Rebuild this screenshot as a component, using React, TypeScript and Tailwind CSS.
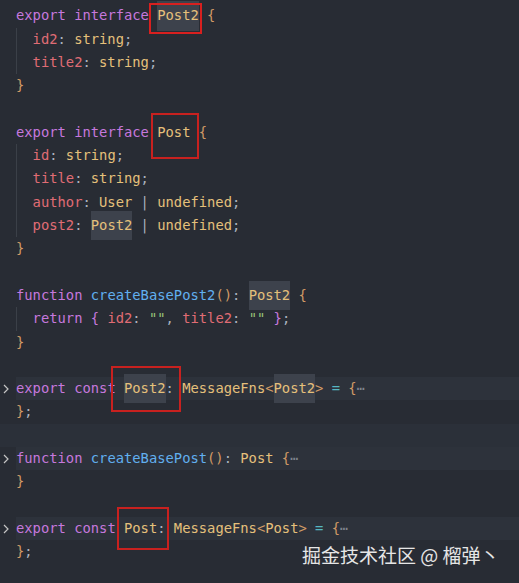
type Tok = [string, string?, boolean?];

const C = {
  kw: "#c678dd",
  fn: "#61afef",
  ty: "#e5c07b",
  pr: "#e06c75",
  st: "#98c379",
  p: "#abb2bf",
  b1: "#d19a66",
  b2: "#c678dd",
  op: "#56b6c2",
  dim: "#7f848e",
};

type Line = { toks: Tok[]; indent?: boolean; fold?: boolean; current?: boolean };

const lines: Line[] = [
  { toks: [["export ", C.kw], ["interface ", C.kw], ["Post2", C.ty, true], [" "], ["{", C.b1]] },
  { indent: true, toks: [["id2", C.pr], [": "], ["string", C.ty], [";"]] },
  { indent: true, toks: [["title2", C.pr], [": "], ["string", C.ty], [";"]] },
  { toks: [["}", C.b1]] },
  { toks: [] },
  { toks: [["export ", C.kw], ["interface ", C.kw], ["Post", C.ty], [" "], ["{", C.b1]] },
  { indent: true, toks: [["id", C.pr], [": "], ["string", C.ty], [";"]] },
  { indent: true, toks: [["title", C.pr], [": "], ["string", C.ty], [";"]] },
  { indent: true, toks: [["author", C.pr], [": "], ["User", C.ty], [" | "], ["undefined", C.ty], [";"]] },
  { indent: true, toks: [["post2", C.pr], [": "], ["Post2", C.ty, true], [" | "], ["undefined", C.ty], [";"]] },
  { toks: [["}", C.b1]] },
  { toks: [] },
  { toks: [["function ", C.kw], ["createBasePost2", C.fn], ["()", C.b1], [": "], ["Post2", C.ty, true], [" "], ["{", C.b1]] },
  {
    indent: true,
    toks: [["return ", C.kw], ["{", C.b2], [" "], ["id2", C.pr], [": "], ['""', C.st], [", "], ["title2", C.pr], [": "], ['""', C.st], [" "], ["}", C.b2], [";"]],
  },
  { toks: [["}", C.b1]] },
  { toks: [] },
  {
    fold: true,
    toks: [["export ", C.kw], ["const ", C.kw], ["Post2", C.ty, true], [": "], ["MessageFns", C.ty], ["<", C.b1], ["Post2", C.ty, true], [">", C.b1], [" "], ["=", C.op], [" "], ["{", C.b1], ["⋯", C.dim]],
  },
  { toks: [["}", C.b1], [";"]] },
  { toks: [], current: true },
  { fold: true, toks: [["function ", C.kw], ["createBasePost", C.fn], ["()", C.b1], [": "], ["Post", C.ty], [" "], ["{", C.b1], ["⋯", C.dim]] },
  { toks: [["}", C.b1]] },
  { toks: [] },
  {
    fold: true,
    toks: [["export ", C.kw], ["const ", C.kw], ["Post", C.ty], [": "], ["MessageFns", C.ty], ["<", C.b1], ["Post", C.ty], [">", C.b1], [" "], ["=", C.op], [" "], ["{", C.b1], ["⋯", C.dim]],
  },
  { toks: [["}", C.b1], [";"]] },
];

function Chevron() {
  return (
    <svg width="6" height="10" viewBox="0 0 6 10" className="ml-[3px]">
      <path d="M1 1l4 4-4 4" fill="none" stroke="#c5c5c5" strokeWidth="1.2" />
    </svg>
  );
}

function CodeLine({ line }: { line: Line }) {
  const bg = line.fold ? "bg-[#2d323b]" : "";
  return (
    <div className={`flex h-[23.3px] items-center ${line.current ? "bg-[#2b3039]" : ""}`}>
      <div className="flex w-[16px] shrink-0 items-center">{line.fold && <Chevron />}</div>
      <div className={`flex h-full flex-1 items-center whitespace-pre ${bg}`}>
        {line.indent && <span className="inline-block h-full w-[16.6px] border-l border-[#3b4048]" />}
        {line.toks.map(([t, c, hl], i) => (
          <span key={i} style={{ color: c ?? C.p }} className={hl ? "bg-[#3d424c] py-[3px]" : ""}>
            {t}
          </span>
        ))}
      </div>
    </div>
  );
}

export default function App() {
  return (
    <div className="relative h-[583px] w-[519px] overflow-hidden bg-[#282c34] pt-[4.35px] font-['DejaVu_Sans_Mono',monospace] text-[13.8px] leading-[23.3px]">
      {lines.map((l, i) => (
        <CodeLine key={i} line={l} />
      ))}

      <div className="absolute left-[149px] top-[3px] h-[31px] w-[53px] border-2 border-[#d8201f]" />
      <div className="absolute left-[151px] top-[113px] h-[46px] w-[48px] border-2 border-[#c8211f]" />
      <div className="absolute left-[111px] top-[366px] h-[46px] w-[70px] border-2 border-[#c8211f]" />
      <div className="absolute left-[117px] top-[507px] h-[43px] w-[52px] border-2 border-[#c8211f]" />

      <div className="absolute left-[302px] top-[542px] font-['Noto_Sans_CJK_SC',sans-serif] text-[19px] leading-[25px] text-[#e6e6e6]">
        掘金技术社区 @ 榴弹丶
      </div>
    </div>
  );
}
